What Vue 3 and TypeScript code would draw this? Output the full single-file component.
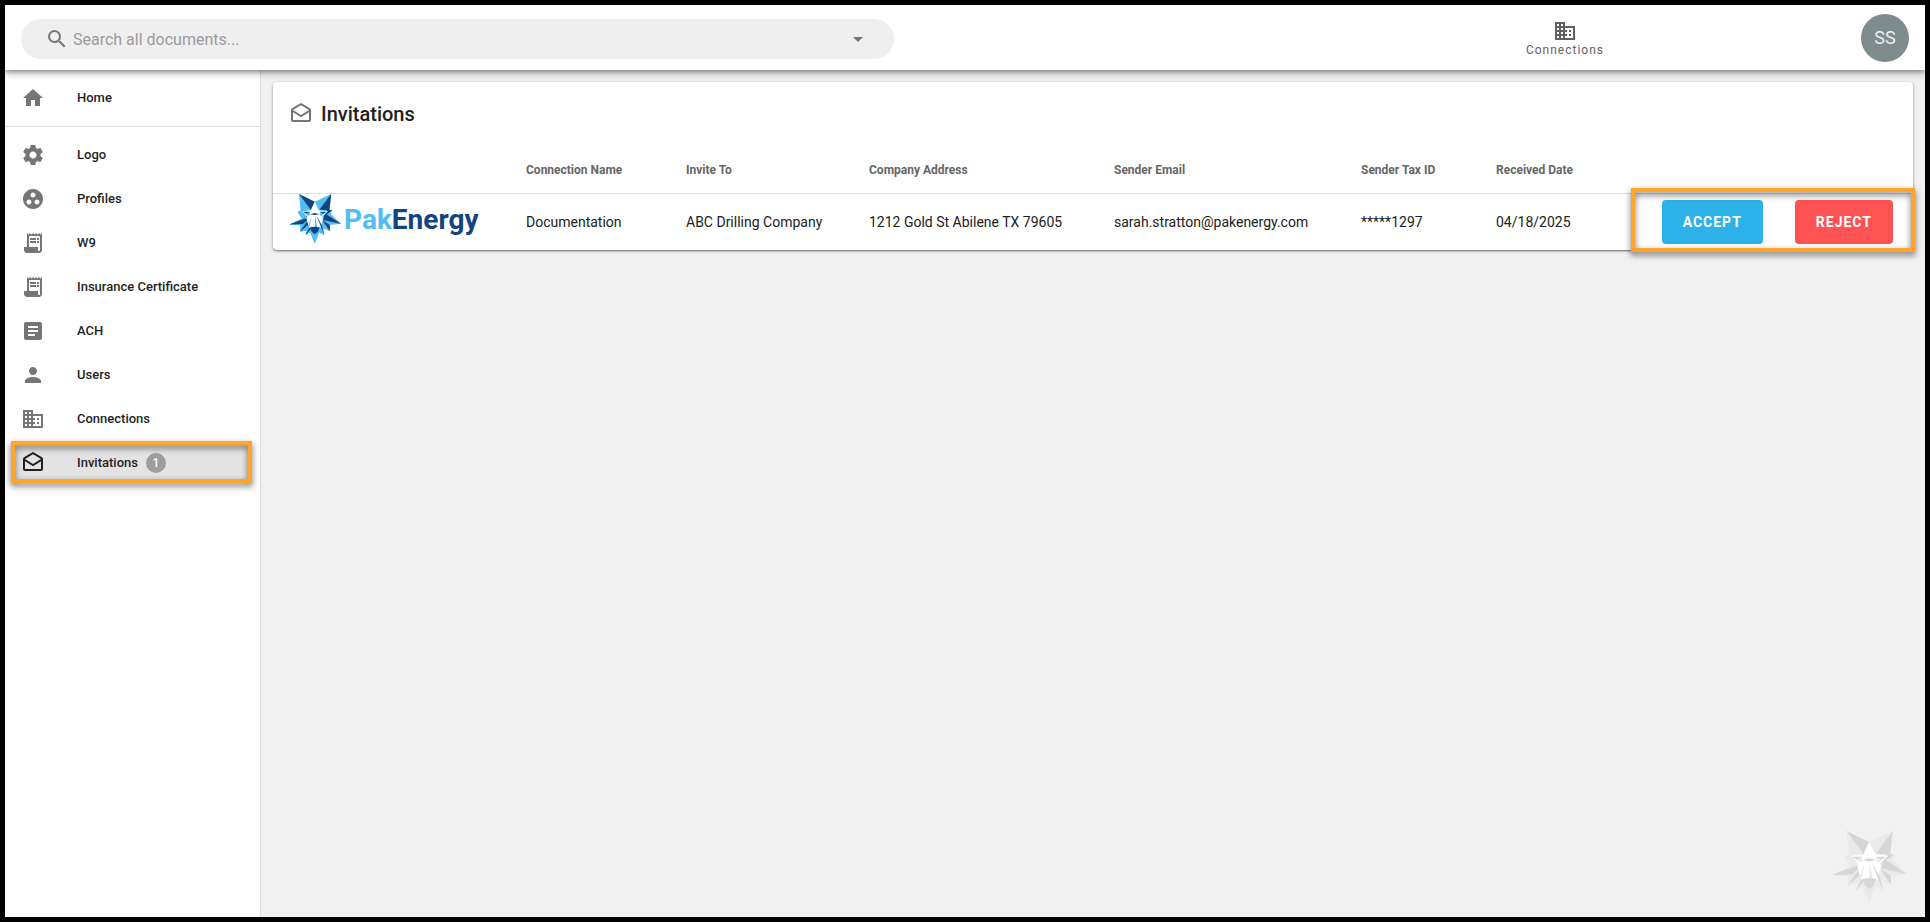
<script setup lang="ts">
interface NavItem {
  label: string
  icon: string
  badge?: number
}

interface Invitation {
  name: string
  inviteTo: string
  address: string
  email: string
  taxId: string
  date: string
}

const icons: Record<string, string> = {
  home: 'M10 20v-6h4v6h5v-8h3L12 3 2 12h3v8z',
  cog: 'M19.43 12.98c.04-.32.07-.64.07-.98s-.03-.66-.07-.98l2.11-1.65c.19-.15.24-.42.12-.64l-2-3.46c-.12-.22-.39-.3-.61-.22l-2.49 1c-.52-.4-1.08-.73-1.69-.98l-.38-2.65A.49.49 0 0 0 14 2h-4c-.25 0-.46.18-.49.42l-.38 2.65c-.61.25-1.17.59-1.69.98l-2.49-1c-.23-.09-.49 0-.61.22l-2 3.46c-.13.22-.07.49.12.64l2.11 1.65c-.04.32-.07.65-.07.98s.03.66.07.98l-2.11 1.65c-.19.15-.24.42-.12.64l2 3.46c.12.22.39.3.61.22l2.49-1c.52.4 1.08.73 1.69.98l.38 2.65c.03.24.24.42.49.42h4c.25 0 .46-.18.49-.42l.38-2.65c.61-.25 1.17-.59 1.69-.98l2.49 1c.23.09.49 0 .61-.22l2-3.46c.12-.22.07-.49-.12-.64l-2.11-1.65zM12 15.5c-1.93 0-3.5-1.57-3.5-3.5s1.57-3.5 3.5-3.5 3.5 1.57 3.5 3.5-1.57 3.5-3.5 3.5z',
  profiles: 'M12 2C6.48 2 2 6.48 2 12s4.48 10 10 10 10-4.48 10-10S17.52 2 12 2zM8 17.5c-1.38 0-2.5-1.12-2.5-2.5s1.12-2.5 2.5-2.5 2.5 1.12 2.5 2.5-1.12 2.5-2.5 2.5zM9.5 8c0-1.38 1.12-2.5 2.5-2.5s2.5 1.12 2.5 2.5-1.12 2.5-2.5 2.5S9.5 9.380 9.5 8zm6.500 9.500c-1.38 0-2.5-1.12-2.5-2.5s1.120-2.500 2.500-2.500 2.500 1.120 2.500 2.500-1.120 2.500-2.500 2.500z',
  receipt: 'M19.500 3.500 18 2l-1.500 1.500L15 2l-1.500 1.500L12 2l-1.500 1.500L9 2 7.500 3.500 6 2v14H3v3c0 1.660 1.340 3 3 3h12c1.660 0 3-1.340 3-3V2zM19 19c0 .55-.45 1-1 1s-1-.45-1-1v-3H8V5h11zM9 7h6v2H9zm7 0h2v2h-2zm-7 3h6v2H9zm7 0h2v2h-2z',
  article: 'M19 3H5c-1.100 0-2 .9-2 2v14c0 1.100.9 2 2 2h14c1.100 0 2-.9 2-2V5c0-1.100-.9-2-2-2zm-5 14H7v-2h7zm3-4H7v-2h10zm0-4H7V7h10z',
  person: 'M12 12c2.210 0 4-1.790 4-4s-1.790-4-4-4-4 1.790-4 4 1.790 4 4 4zm0 2c-2.670 0-8 1.340-8 4v2h16v-2c0-2.660-5.330-4-8-4z',
  domain: 'M12 7V3H2v18h20V7zM6 19H4v-2h2zm0-4H4v-2h2zm0-4H4V9h2zm0-4H4V5h2zm4 12H8v-2h2zm0-4H8v-2h2zm0-4H8V9h2zm0-4H8V5h2zm10 12h-8v-2h2v-2h-2v-2h2v-2h-2V9h8zm-2-8h-2v2h2zm0 4h-2v2h2z',
  drafts: 'M21.990 8c0-.72-.37-1.350-.94-1.700L12 1 2.950 6.300C2.380 6.650 2 7.280 2 8v10c0 1.100.9 2 2 2h16c1.100 0 2-.9 2-2zM20 8v.01L12 13 4 8l8-4.680zM4 18v-7.660l8 5.020 8-4.990V18z',
  search: 'M15.500 14h-.79l-.28-.27A6.470 6.470 0 0 0 16 9.500 6.500 6.500 0 1 0 9.500 16c1.610 0 3.090-.59 4.230-1.570l.27.28v.79l5 4.990L20.490 19zm-6 0C7.010 14 5 11.990 5 9.500S7.010 5 9.500 5 14 7.010 14 9.500 11.990 14 9.500 14z',
}

const homeItem: NavItem = { label: 'Home', icon: 'home' }

const navItems: NavItem[] = [
  { label: 'Logo', icon: 'cog' },
  { label: 'Profiles', icon: 'profiles' },
  { label: 'W9', icon: 'receipt' },
  { label: 'Insurance Certificate', icon: 'receipt' },
  { label: 'ACH', icon: 'article' },
  { label: 'Users', icon: 'person' },
  { label: 'Connections', icon: 'domain' },
  { label: 'Invitations', icon: 'drafts', badge: 1 },
]

const headings: string[] = [
  'Connection Name',
  'Invite To',
  'Company Address',
  'Sender Email',
  'Sender Tax ID',
  'Received Date',
]

const invitations: Invitation[] = [
  {
    name: 'Documentation',
    inviteTo: 'ABC Drilling Company',
    address: '1212 Gold St Abilene TX 79605',
    email: 'sarah.stratton@pakenergy.com',
    taxId: '*****1297',
    date: '04/18/2025',
  },
]

// Facets of the lion's head, painted in order.
const facets: { tone: string; points: string }[] = [
  { tone: 'light', points: '43,0 111,33 182,0 175,68 186,70 180,86 224,129 176,134 176,161 148,148 152,178 130,166 111,216 91,166 71,178 76,160 47,163 49,136 0,132 55,106 36,78 50,70' },
  { tone: 'dark', points: '43,0 111,33 95,70' },
  { tone: 'dark', points: '182,0 131,68 174,70' },
  { tone: 'dark', points: '0,132 70,106 80,112 60,130' },
  { tone: 'dark', points: '224,129 156,84 146,112' },
  { tone: 'dark', points: '47,163 80,116 86,130' },
  { tone: 'dark', points: '71,178 90,138 93,152' },
  { tone: 'dark', points: '176,161 143,112 176,134' },
  { tone: 'dark', points: '186,70 166,68 150,98' },
  { tone: 'white', points: '111,33 94,70 56,74 78,96 77,112 86,146 136,146 146,112 144,96 168,74 129,70' },
  { tone: 'dark', points: '60,77 90,77 80,90' },
  { tone: 'dark', points: '162,77 132,77 142,90' },
  { tone: 'light', points: '76,84 90,77 88,92 82,96' },
  { tone: 'light', points: '146,84 132,77 134,92 140,96' },
  { tone: 'dark', points: '90,87 111,82 132,87 111,91' },
  { tone: 'light', points: '112,92 112,143 121,143' },
  { tone: 'dark', points: '118,92 142,136 152,178' },
  { tone: 'light', points: '100,94 74,158 84,152' },
  { tone: 'dark', points: '90,144 111,141 132,144 124,163 111,174 98,163' },
]
</script>

<template>
  <div class="app">
    <header class="topbar">
      <div class="search">
        <svg class="icon" viewBox="0 0 24 24" aria-hidden="true"><path :d="icons.search" /></svg>
        <input type="text" placeholder="Search all documents..." aria-label="Search all documents" />
        <button type="button" class="caret" aria-label="Search options">
          <svg class="icon" viewBox="0 0 24 24" aria-hidden="true"><path d="M7 10l5 5 5-5z" /></svg>
        </button>
      </div>
      <button type="button" class="top-link">
        <svg class="icon" viewBox="0 0 24 24" aria-hidden="true"><path :d="icons.domain" /></svg>
        <span>Connections</span>
      </button>
      <button type="button" class="avatar">SS</button>
    </header>

    <div class="body">
      <nav class="sidebar">
        <div class="group">
          <a href="#" class="item">
            <svg class="icon" viewBox="0 0 24 24" aria-hidden="true"><path :d="icons[homeItem.icon]" /></svg>
            <span>{{ homeItem.label }}</span>
          </a>
        </div>
        <div class="group">
          <a v-for="item in navItems" :key="item.label" href="#" class="item" :class="{ active: item.badge }">
            <svg class="icon" viewBox="0 0 24 24" aria-hidden="true"><path :d="icons[item.icon]" /></svg>
            <span>{{ item.label }}</span>
            <span v-if="item.badge" class="badge">{{ item.badge }}</span>
          </a>
        </div>
      </nav>

      <main class="content">
        <section class="card">
          <h1 class="title">
            <svg class="icon" viewBox="0 0 24 24" aria-hidden="true"><path :d="icons.drafts" /></svg>
            Invitations
          </h1>
          <table>
            <colgroup>
              <col class="c-logo" />
              <col class="c-name" />
              <col class="c-invite" />
              <col class="c-address" />
              <col class="c-email" />
              <col class="c-tax" />
              <col />
              <col class="c-actions" />
            </colgroup>
            <thead>
              <tr>
                <th></th>
                <th v-for="heading in headings" :key="heading" scope="col">{{ heading }}</th>
                <th></th>
              </tr>
            </thead>
            <tbody>
              <tr v-for="row in invitations" :key="row.email">
                <td>
                  <div class="logo">
                    <svg viewBox="0 0 224 216" aria-hidden="true">
                      <polygon v-for="(f, i) in facets" :key="i" :class="f.tone" :points="f.points" />
                    </svg>
                    <span class="wordmark"><span class="pak">Pak</span><span>Energy</span></span>
                  </div>
                </td>
                <td>{{ row.name }}</td>
                <td>{{ row.inviteTo }}</td>
                <td>{{ row.address }}</td>
                <td>{{ row.email }}</td>
                <td>{{ row.taxId }}</td>
                <td>{{ row.date }}</td>
                <td class="actions-cell">
                  <div class="actions">
                    <button type="button" class="btn accept">ACCEPT</button>
                    <button type="button" class="btn reject">REJECT</button>
                  </div>
                </td>
              </tr>
            </tbody>
          </table>
        </section>
        <svg class="watermark" viewBox="0 0 224 216" aria-hidden="true">
          <polygon v-for="(f, i) in facets" :key="i" :class="f.tone" :points="f.points" />
        </svg>
      </main>
    </div>
  </div>
</template>

<style>
body {
  background: #000;
}
</style>

<style scoped>
.app,
.app * {
  box-sizing: border-box;
}

.app {
  display: flex;
  flex-direction: column;
  min-height: 100vh;
  border: 5px solid #000;
  background: #f1f1f1;
  color: #212121;
  font-family: Roboto, 'Liberation Sans', sans-serif;
  font-size: 14px;
}

button,
input {
  border: 0;
  padding: 0;
  background: none;
  color: inherit;
  font: inherit;
}

.icon {
  flex: none;
  width: 24px;
  height: 24px;
  fill: #757575;
}

.topbar {
  position: relative;
  z-index: 1;
  display: flex;
  align-items: center;
  height: 65px;
  padding: 0 16px;
  background: #fff;
  box-shadow: 0 2px 4px rgba(0, 0, 0, 0.3), 0 4px 8px rgba(0, 0, 0, 0.2);
}

.search {
  display: flex;
  align-items: center;
  gap: 4px;
  width: 46.25%;
  height: 40px;
  margin-bottom: -3px;
  padding: 0 24px;
  border-radius: 20px;
  background: #efefef;
}

.search input {
  flex: 1;
  min-width: 0;
  font-size: 16px;
  outline: 0;
}

.search input::placeholder {
  color: #9b9b9b;
  opacity: 1;
}

.caret {
  display: flex;
}

.top-link {
  display: flex;
  flex-direction: column;
  align-items: center;
  margin-right: 257px;
  margin-left: auto;
  color: #616161;
  font-size: 12px;
  letter-spacing: 1px;
  line-height: 14px;
}

.top-link .icon {
  fill: #616161;
}

.avatar {
  width: 48px;
  height: 48px;
  border-radius: 50%;
  background: #7f8c8d;
  color: #eceff1;
  font-size: 18px;
}

.body {
  display: flex;
  flex: 1;
}

.sidebar {
  flex: none;
  width: 256px;
  border-right: 1px solid #dcdcdc;
  background: #fff;
}

.group {
  display: flex;
  flex-direction: column;
  gap: 4px;
  padding: 8px;
}

.group + .group {
  border-top: 1px solid #dcdcdc;
}

.item {
  position: relative;
  display: flex;
  align-items: center;
  height: 40px;
  padding: 0 8px;
  color: #1f1f1f;
  font-size: 13px;
  font-weight: 500;
  line-height: 16px;
  text-decoration: none;
}

.item .icon {
  margin-right: 32px;
}

.active {
  background: #e3e3e3;
}

.active .icon {
  fill: #212121;
}

.active::after,
.actions::after {
  content: '';
  position: absolute;
  border: 4px solid #ffa42c;
  filter: drop-shadow(0 3px 3px rgba(0, 0, 0, 0.6));
  pointer-events: none;
}

.active::after {
  inset: -2px 0 0 -2px;
}

.badge {
  width: 20px;
  height: 20px;
  margin-left: 8px;
  border-radius: 50%;
  background: #9e9e9e;
  color: #fff;
  font-size: 12px;
  line-height: 20px;
  text-align: center;
}

.content {
  position: relative;
  flex: 1;
  min-width: 0;
  padding: 12px;
}

.card {
  border-radius: 4px;
  background: #fff;
  box-shadow: 0 1px 2px rgba(0, 0, 0, 0.5), 0 1px 4px rgba(0, 0, 0, 0.12);
}

.title {
  display: flex;
  align-items: center;
  gap: 8px;
  height: 64px;
  margin: 0;
  padding: 0 16px;
  font-size: 20px;
  font-weight: 500;
}

table {
  width: 100%;
  border-collapse: separate;
  border-spacing: 0;
  table-layout: fixed;
}

.c-logo {
  width: 237px;
}

.c-name {
  width: 160px;
}

.c-invite {
  width: 183px;
}

.c-address {
  width: 245px;
}

.c-email {
  width: 247px;
}

.c-tax {
  width: 135px;
}

.c-actions {
  width: 280px;
}

th,
td {
  padding: 0 16px;
  text-align: left;
  white-space: nowrap;
}

th {
  height: 48px;
  border-bottom: 1px solid #dcdcdc;
  color: #666;
  font-size: 12px;
  font-weight: 700;
}

td {
  height: 56px;
}

.logo {
  display: flex;
  align-items: center;
  gap: 3px;
  height: 56px;
  padding-bottom: 6px;
}

.logo svg {
  flex: none;
  width: 52px;
  height: 50px;
}

.wordmark {
  color: #12457f;
  font-size: 28px;
  font-weight: 700;
}

.pak {
  color: #52bdf0;
}

.logo .light {
  fill: #52bdf0;
}

.logo .dark {
  fill: #12457f;
}

.white {
  fill: #fff;
}

.actions-cell {
  padding-right: 20px;
}

.actions {
  position: relative;
  display: flex;
  gap: 32px;
  width: fit-content;
  margin-left: auto;
}

.actions::after {
  inset: -12px -22px -8px -31px;
}

.btn {
  height: 44px;
  padding: 0 21px;
  border-radius: 4px;
  color: #fff;
  font-weight: 700;
  letter-spacing: 1px;
}

.accept {
  background: #2cb1e8;
}

.reject {
  background: #ff5252;
}

.watermark {
  position: absolute;
  right: 18px;
  bottom: 14px;
  width: 75px;
  height: 72px;
}

.watermark .light {
  fill: #eaeaea;
}

.watermark .dark {
  fill: #d6d6d6;
}
</style>
